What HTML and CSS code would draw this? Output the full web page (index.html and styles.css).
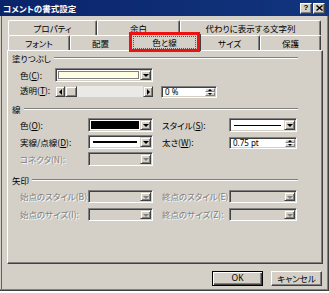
FILE: index.html
```html
<!DOCTYPE html>
<html lang="ja">
<head>
  <meta charset="UTF-8">
  <title>コメントの書式設定</title>
  <link rel="stylesheet" href="styles.css">
</head>
<body>
<div class="dialog">
  <div class="titlebar">
    <span class="title">コメントの書式設定</span>
    <span class="tbtns">
      <span class="tbtn">?</span>
      <span class="tbtn"><svg width="7" height="6" viewBox="0 0 7 6"><path d="M0.5 0.5 L6.5 5.5 M6.5 0.5 L0.5 5.5" stroke="#000" stroke-width="1.4"/></svg></span>
    </span>
  </div>

  <div class="content">
    <div class="tabrow">
      <div class="tab t-prop">プロパティ</div>
      <div class="tab t-margin">余白</div>
      <div class="tab t-alt">代わりに表示する文字列</div>
    </div>
    <div class="tabrow">
      <div class="tab t-font">フォント</div>
      <div class="tab t-align">配置</div>
      <div class="tab t-color sel"><span class="focus">色と線</span></div>
      <div class="tab t-size">サイズ</div>
      <div class="tab t-protect">保護</div>
    </div>

    <div class="panel">
      <div class="ghead g1"><span>塗りつぶし</span><i class="etch"></i></div>
      <div class="row r1">
        <label class="lab w35">色(<u>C</u>):</label>
        <div class="combo w98"><span class="field"><i class="swatch yellow"></i></span><i class="drop"></i></div>
      </div>
      <div class="row r2">
        <label class="lab w35">透明(<u>T</u>):</label>
        <div class="scroll"><i class="sbtn left"></i><i class="thumb"></i><i class="track"></i><i class="sbtn right"></i></div>
        <div class="spin w56"><span class="field txt">0 %</span><span class="spinbtns"><i class="up"></i><i class="down"></i></span></div>
      </div>

      <div class="ghead g2"><span>線</span><i class="etch"></i></div>
      <div class="row r3">
        <label class="lab w68">色(<u>O</u>):</label>
        <div class="combo w65"><span class="field"><i class="swatch black"></i></span><i class="drop"></i></div>
        <label class="lab lab2">スタイル(<u>S</u>):</label>
        <div class="combo w68"><span class="field"><i class="stroke thin"></i></span><i class="drop"></i></div>
      </div>
      <div class="row r4">
        <label class="lab w68">実線/点線(<u>D</u>):</label>
        <div class="combo w65"><span class="field"><i class="stroke thick"></i></span><i class="drop"></i></div>
        <label class="lab lab2">太さ(<u>W</u>):</label>
        <div class="spin w68 short"><span class="field txt">0.75 pt</span><span class="spinbtns"><i class="up"></i><i class="down"></i></span></div>
      </div>
      <div class="row r5">
        <label class="lab w68 off">コネクタ(N):</label>
        <div class="combo w65 off"><span class="field"></span><i class="drop"></i></div>
      </div>

      <div class="ghead g3"><span>矢印</span><i class="etch"></i></div>
      <div class="row r6">
        <label class="lab w68 off">始点のスタイル(B):</label>
        <div class="combo w65 off"><span class="field"></span><i class="drop"></i></div>
        <label class="lab lab2 off">終点のスタイル(E):</label>
        <div class="combo w68 off"><span class="field"></span><i class="drop"></i></div>
      </div>
      <div class="row r7">
        <label class="lab w68 off">始点のサイズ(I):</label>
        <div class="combo w65 off"><span class="field"></span><i class="drop"></i></div>
        <label class="lab lab2 off">終点のサイズ(Z):</label>
        <div class="combo w68 off"><span class="field"></span><i class="drop"></i></div>
      </div>
    </div>

    <div class="btns">
      <span class="btn default">OK</span>
      <span class="btn">キャンセル</span>
    </div>
  </div>

  <div class="mark"></div>
</div>
</body>
</html>
```

FILE: styles.css
```css
* { box-sizing: border-box; }
html { background: #fff; }
body {
  margin: 0;
  font-family: "Noto Sans CJK JP", "Noto Sans", sans-serif;
  font-size: 8.5px;
  font-feature-settings: "palt";
  color: #000;
  line-height: 1;
}
i { display: block; font-style: normal; }
u { text-decoration: underline; text-underline-offset: 1px; }

.dialog {
  position: relative;
  width: 329px;
  height: 291px;
  background: #d4d0c8;
  box-shadow: inset 0 -1px #404040, inset -1px 0 #404040, inset 0 -2px #808080, inset -2px 0 #808080, inset 1px 0 #d4d0c8, inset 2px 0 #606060;
}

/* title bar */
.titlebar {
  height: 16px;
  display: flex;
  align-items: center;
  justify-content: space-between;
  padding: 0 4px 0 3px;
  background: linear-gradient(90deg, #0a246a, #12357f);
  color: #fff;
  font-weight: bold;
}
.tbtns { display: flex; gap: 1px; }
.tbtn {
  width: 12px;
  height: 11px;
  display: flex;
  align-items: center;
  justify-content: center;
  background: #d4d0c8;
  color: #000;
  font-family: "Liberation Sans", sans-serif;
  font-size: 8px;
  border: 1px solid;
  border-color: #fff #404040 #404040 #fff;
  box-shadow: inset -1px -1px #808080;
}

.content { padding: 4px 0 0 7px; }

/* tabs */
.tabrow { display: flex; height: 15px; margin-left: 1px; }
.tab {
  height: 15px;
  display: flex;
  align-items: center;
  justify-content: center;
  background: #d4d0c8;
  border-top: 1px solid #fff;
  border-left: 1px solid #fff;
  border-right: 1px solid #404040;
  box-shadow: inset -1px 0 #808080;
  border-radius: 2px 2px 0 0;
}
.t-prop { width: 89px; }
.t-margin { width: 83px; }
.t-alt { width: 141px; }
.t-font { width: 62px; }
.t-align { width: 61px; }
.t-color { width: 68px; }
.t-size { width: 61px; }
.t-protect { width: 61px; }
.tab.sel {
  width: 72px;
  height: 18px;
  margin: -2px -2px 0;
  z-index: 2;
  align-items: stretch;
  padding: 2px 4px 2px 3px;
}
.focus {
  flex: 1;
  display: flex;
  align-items: center;
  justify-content: center;
  border: 1px dotted #555;
}

/* panel */
.panel {
  width: 316px;
  height: 214px;
  border: 1px solid;
  border-color: #fff #404040 #404040 #fff;
  box-shadow: inset -1px -1px #808080;
}
.ghead {
  display: flex;
  align-items: center;
  gap: 3px;
  height: 12px;
  padding: 0 24px 0 4px;
}
.etch {
  flex: 1;
  height: 2px;
  border-top: 1px solid #808080;
  border-bottom: 1px solid #fff;
}
.g1 { margin-top: 1px; }
.g2 { margin-top: 5px; }
.g3 { margin-top: 8px; }

.row { display: flex; align-items: center; padding-left: 12px; }
.r1 { height: 14px; margin-top: 4px; }
.r2 { height: 12px; margin-top: 4px; align-items: flex-start; }
.r3 { height: 14px; margin-top: 3px; }
.r4 { height: 14px; margin-top: 3px; }
.r5 { height: 14px; margin-top: 3px; }
.r6 { height: 13px; margin-top: 4px; }
.r7 { height: 13px; margin-top: 5px; }

.lab { white-space: nowrap; }
.w35 { width: 35px; flex: none; }
.w68 { width: 68px; flex: none; }
.w65 { width: 65px; flex: none; }
.w98 { width: 98px; flex: none; }
.w56 { width: 56px; flex: none; margin-left: 8px; }
.lab2 { width: 67px; margin-left: 9px; flex: none; }
.off { color: #808080; text-shadow: 1px 1px 0 #fff; }

/* sunken fields */
.combo, .spin {
  height: 100%;
  display: flex;
  padding: 1px;
  background: #fff;
  border: 1px solid;
  border-color: #808080 #fff #fff #808080;
  box-shadow: inset 1px 1px #404040, inset -1px -1px #d4d0c8;
}
.field {
  flex: 1;
  display: flex;
  align-items: center;
  padding: 1px;
}
.combo.off, .combo.off .field { background: #d4d0c8; }
.swatch { flex: 1; height: 100%; border: 1px solid #808080; }
.yellow { background: #ffffe1; }
.black { background: #000; border-color: #000; }
.stroke { flex: 1; margin: 0 2px; background: #000; }
.thin { height: 1px; }
.thick { height: 2px; }

.drop {
  width: 11px;
  flex: none;
  display: flex;
  align-items: center;
  justify-content: center;
  background: #d4d0c8;
  border: 1px solid;
  border-color: #d4d0c8 #404040 #404040 #d4d0c8;
  box-shadow: inset 1px 1px #fff, inset -1px -1px #808080;
}
.drop::after {
  content: "";
  border-left: 3px solid transparent;
  border-right: 3px solid transparent;
  border-top: 3px solid #000;
  margin-top: 1px;
}
.combo.off .drop::after { border-top-color: #808080; }

.txt { padding-left: 2px; font-family: "Noto Sans", sans-serif; font-size: 8px; }
.spin { height: 12px; }
.short { height: 12px; margin-top: 2px; }
.spinbtns { width: 10px; flex: none; display: flex; flex-direction: column; background: #d4d0c8; }
.spinbtns i {
  flex: 1;
  display: flex;
  align-items: center;
  justify-content: center;
  border: 1px solid;
  border-color: #fff #808080 #808080 #fff;
}
.spinbtns .up::after {
  content: "";
  border-left: 2px solid transparent;
  border-right: 2px solid transparent;
  border-bottom: 2px solid #000;
}
.spinbtns .down::after {
  content: "";
  border-left: 2px solid transparent;
  border-right: 2px solid transparent;
  border-top: 2px solid #000;
}

/* scroll bar */
.scroll { width: 98px; height: 11px; flex: none; display: flex; background: #ebe9e5; }
.sbtn, .thumb {
  height: 11px;
  display: flex;
  align-items: center;
  justify-content: center;
  background: #d4d0c8;
  border: 1px solid;
  border-color: #d4d0c8 #404040 #404040 #d4d0c8;
  box-shadow: inset 1px 1px #fff, inset -1px -1px #808080;
}
.sbtn { width: 10px; }
.thumb { width: 12px; }
.track { flex: 1; }
.sbtn.left::after {
  content: "";
  border-top: 3px solid transparent;
  border-bottom: 3px solid transparent;
  border-right: 3px solid #000;
}
.sbtn.right::after {
  content: "";
  border-top: 3px solid transparent;
  border-bottom: 3px solid transparent;
  border-left: 3px solid #000;
}

/* buttons */
.btns {
  width: 316px;
  display: flex;
  justify-content: flex-end;
  gap: 8px;
  margin-top: 7px;
  padding-right: 1px;
}
.btn {
  width: 51px;
  height: 15px;
  display: flex;
  align-items: center;
  justify-content: center;
  border: 1px solid;
  border-color: #fff #404040 #404040 #fff;
  box-shadow: inset -1px -1px #808080;
}
.btn.default {
  border-color: #000;
  box-shadow: inset 1px 1px #fff, inset -1px -1px #404040, inset -2px -2px #808080;
  font-family: "Noto Sans", sans-serif;
}

/* red highlight drawn over the tab */
.mark {
  position: absolute;
  left: 129px;
  top: 32px;
  width: 71px;
  height: 20px;
  border: 3px solid #ee1111;
  z-index: 5;
}
```
